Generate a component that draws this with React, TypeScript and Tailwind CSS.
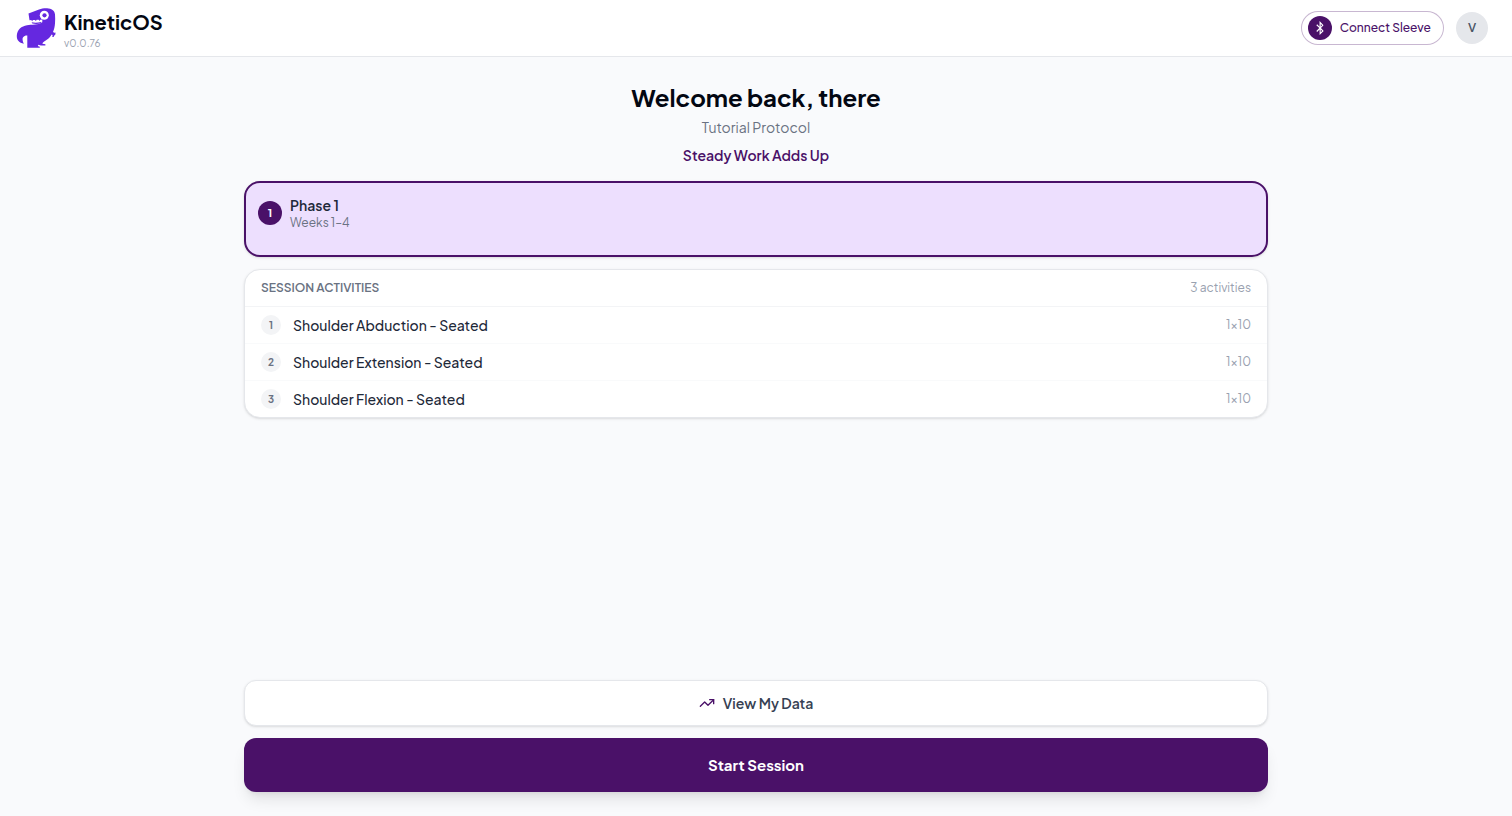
import { TrendingUp } from "lucide-react";
import { FaBluetoothB } from "react-icons/fa";

type Activity = { name: string; volume: string };

const activities: Activity[] = [
  { name: "Shoulder Abduction - Seated", volume: "1×10" },
  { name: "Shoulder Extension - Seated", volume: "1×10" },
  { name: "Shoulder Flexion - Seated", volume: "1×10" },
];

function DinoLogo() {
  return (
    <svg viewBox="0 0 40 40" className="size-10" aria-hidden="true">
      <path
        fill="#6528e0"
        d="M12.500 5.500 23 1.600C25.500.6 28 .2 31 .3c4.500.1 7.600 2.300 8 6.200.3 3 .2 6 0 9-.2 3.200-.9 6-2 8.500l1.300.8 1.200-.3-.1 2-1.300 1.200-.5 1.300-1.300-.1.300-1.900-.9-.6c-1.500 2.600-3.500 4.600-6 6-1.600.9-3 1.800-3.300 3.300l3 .5v1.400h-4.600l-2.400-.8-.6 1.200 2 .7v1.100H11.300V27.600c-2.800-.2-5 1.600-4.700 4.200.1 1.500.5 2.500 1.300 3.900C3.200 35.200.6 32 .8 27.800 1 21.800 5.500 18 11 17.200c4.500-.6 11 .1 15.300-2.900v-2.700l-2 .1-.6 1.200-1-1.200-2 .1-.8 1.300-1-1.200-2 .1-.7 1.300-1-1.200-1.700.1Z"
      />
      <path d="M15.600 14.300c3 .6 6 .5 9.600-.3v1.300c-3 .7-6 .8-8.900.2Z" fill="#6528e0" />
      <circle cx="28.300" cy="7.200" r="4.500" fill="#fff" />
      <circle cx="28.500" cy="7.300" r="2.100" fill="#6528e0" />
    </svg>
  );
}

function Header() {
  return (
    <header className="flex h-[57px] items-center justify-between border-b border-gray-200 bg-white pl-4 pr-6">
      <div className="flex items-center gap-2">
        <DinoLogo />
        <div className="flex flex-col pt-0.5">
          <span className="text-xl font-bold leading-7 text-gray-950">KineticOS</span>
          <span className="text-[10px] leading-[14px] text-gray-400">v0.0.76</span>
        </div>
      </div>
      <div className="flex items-center gap-3">
        <button
          type="button"
          className="flex h-[34px] items-center gap-2 rounded-full border border-[#4a1168]/30 bg-white pl-1.5 pr-3 text-xs font-medium text-[#4a1168]"
        >
          <span className="flex size-6 items-center justify-center rounded-full bg-[#4a1168] text-white">
            <FaBluetoothB className="size-3.5" aria-hidden="true" />
          </span>
          Connect Sleeve
        </button>
        <button
          type="button"
          aria-label="Account"
          className="size-8 rounded-full bg-gray-200 text-xs font-semibold text-gray-600"
        >
          V
        </button>
      </div>
    </header>
  );
}

export default function App() {
  return (
    <div className="flex min-h-screen flex-col bg-[#f9fafc] font-['Plus_Jakarta_Sans',Inter,sans-serif]">
      <Header />
      <main className="mx-auto flex w-full max-w-5xl flex-1 flex-col pb-6 pt-6">
        <div className="text-center">
          <h1 className="text-2xl font-bold leading-8 text-gray-950">Welcome back, there</h1>
          <p className="mt-1 text-sm leading-5 text-gray-500">Tutorial Protocol</p>
          <p className="mt-2 text-sm font-semibold leading-5 text-[#4a1168]">Steady Work Adds Up</p>
        </div>

        <section className="mt-4 flex h-[76px] gap-2 rounded-2xl border-2 border-[#4a1168] bg-[#eddffe] px-3 pt-3.5 shadow-sm">
          <span className="mt-1 flex size-6 items-center justify-center rounded-full bg-[#4a1168] text-[11px] font-bold text-white">
            1
          </span>
          <div>
            <h2 className="text-sm font-semibold leading-4 text-gray-800">Phase 1</h2>
            <p className="text-xs leading-5 text-gray-500">Weeks 1–4</p>
          </div>
        </section>

        <section className="mt-3 overflow-hidden rounded-2xl border border-gray-200 bg-white shadow-sm">
          <div className="flex items-center justify-between border-b border-gray-100 px-4 py-2">
            <h2 className="text-xs font-semibold leading-5 text-gray-500">SESSION ACTIVITIES</h2>
            <span className="text-xs leading-5 text-gray-400">3 activities</span>
          </div>
          <ol className="divide-y divide-gray-50">
            {activities.map((activity, index) => (
              <li key={activity.name} className="flex items-center gap-3 px-4 py-2">
                <span className="flex size-5 items-center justify-center rounded-full bg-gray-100 text-[10px] font-bold text-gray-500">
                  {index + 1}
                </span>
                <span className="flex-1 text-sm font-medium leading-5 text-gray-800">{activity.name}</span>
                <span className="text-xs leading-5 text-gray-400">{activity.volume}</span>
              </li>
            ))}
          </ol>
        </section>

        <div className="mt-auto flex flex-col gap-3 pt-6">
          <button
            type="button"
            className="flex h-[46px] items-center justify-center gap-2 rounded-xl border border-gray-200 bg-white text-sm font-semibold text-gray-700 shadow-sm"
          >
            <TrendingUp className="size-4 text-[#4a1168]" aria-hidden="true" />
            View My Data
          </button>
          <button
            type="button"
            className="h-[54px] rounded-xl bg-[#4a1168] text-[15px] font-bold text-white shadow-lg"
          >
            Start Session
          </button>
        </div>
      </main>
    </div>
  );
}
